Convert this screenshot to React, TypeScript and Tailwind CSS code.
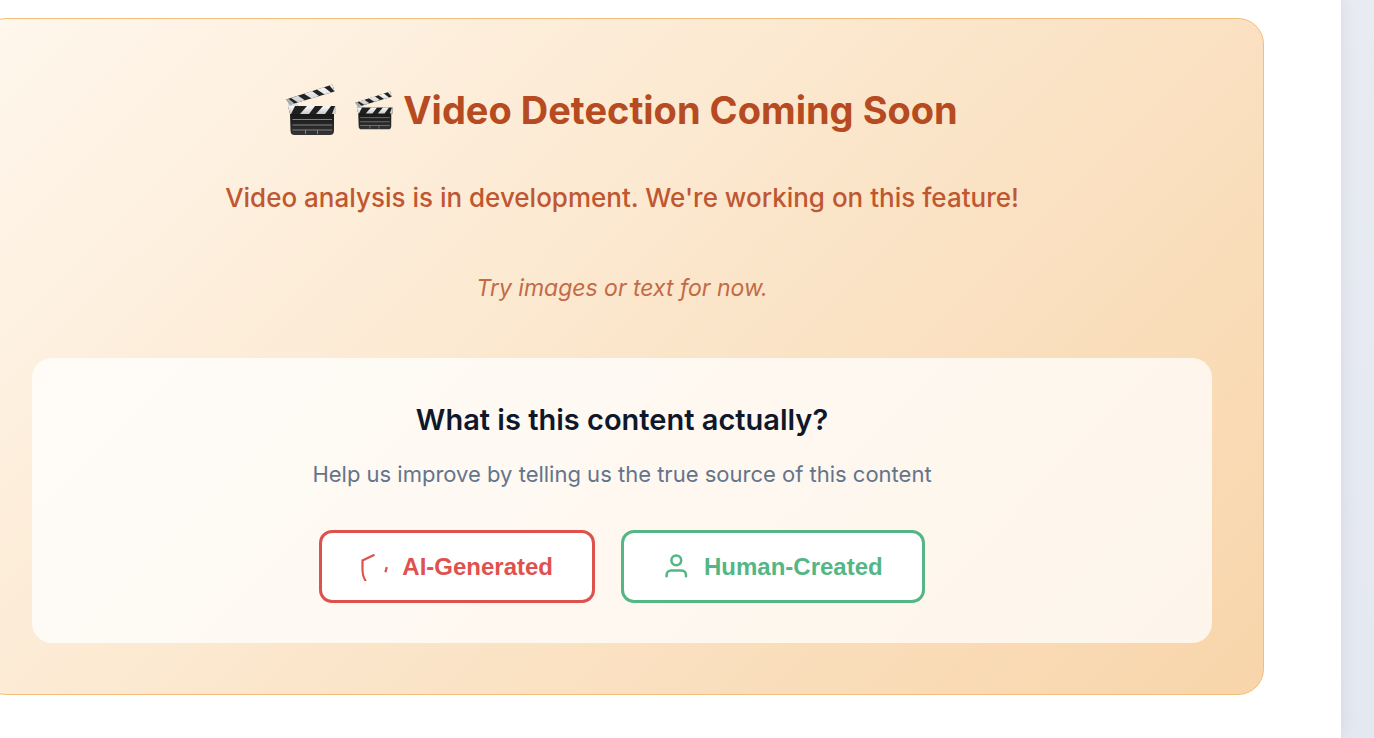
function Clapper({ className }: { className: string }) {
  return (
    <svg viewBox="0 0 50 52" className={className} aria-hidden="true">
      <defs>
        <linearGradient id="slate" x1="0" y1="0" x2="0" y2="1">
          <stop offset="0" stopColor="#161616" />
          <stop offset="1" stopColor="#343434" />
        </linearGradient>
        <linearGradient id="stripe" x1="0" y1="0" x2="0" y2="1">
          <stop offset="0" stopColor="#fafafa" />
          <stop offset="1" stopColor="#c9cbcd" />
        </linearGradient>
      </defs>
      <path d="M1 16L8 15L13 23L14 27L5 28L3 22Z" fill="#bcc3c8" />
      <circle cx="8" cy="22" r="3.500" fill="#dfe3e6" />
      <path d="M0 15.500L46.500 0.500L48.500 7.500L5 20.500Z" fill="#222" />
      <path d="M5 13.900L12 11.700L19 16.300L12 18.400ZM18 9.700L26 7.100L33 12.100L25.500 14.400ZM31 5.500L38 3.200L45 8.500L38.500 10.500Z" fill="url(#stripe)" />
      <path d="M43.500 1.500L46.500 0.500L48.500 7.500Z" fill="url(#stripe)" />
      <path d="M0 15.500L2.500 14.700L8.500 19.500L5 20.500Z" fill="#aeb3b7" />
      <path d="M4 29H48V46.500Q48 51 44 51H8.500Q4.500 51 4.500 46.500Z" fill="url(#slate)" />
      <path d="M2 22H50V30H4Z" fill="#202020" />
      <path d="M2 22H9L5 30H4ZM21 22H29L23 30H14ZM37 22H45L39 30H30Z" fill="url(#stripe)" />
      <path d="M49 22H50V30H46Z" fill="#d0d2d4" />
      <path d="M6.500 35.500H46M6.500 41H46M6.500 46H46M19.500 46V50M31.500 46V50" stroke="#8d8d8d" strokeWidth="0.900" fill="none" />
    </svg>
  );
}

function CircuitIcon() {
  return (
    <svg viewBox="0 0 28 28" className="size-7" fill="none" stroke="currentColor" strokeWidth="2.200" aria-hidden="true">
      <path d="M13.500 1.800L1.500 7.500V17Q1.500 23.500 4.800 28.200M25.800 14L24.400 19.200" />
    </svg>
  );
}

function PersonIcon() {
  return (
    <svg viewBox="0 0 28 28" className="size-7" fill="none" stroke="currentColor" strokeWidth="2.500" strokeLinecap="round" aria-hidden="true">
      <circle cx="13.300" cy="7.300" r="4.900" />
      <path d="M3.600 23.200V22A4.600 4.600 0 0 1 8.200 17.400H18.400A4.600 4.600 0 0 1 23 22V23.200" />
    </svg>
  );
}

const button =
  "flex items-center gap-[13px] rounded-[13px] border-3 bg-white px-[39px] py-[19px] font-['Liberation_Sans',Arial,sans-serif] text-[24px] leading-[29px] font-bold";

export default function App() {
  return (
    <div className="min-h-screen overflow-hidden bg-linear-to-b from-[#e8ebf1] to-[#e4e8f1] pr-[33px] font-['Inter',sans-serif]">
      <main className="min-h-screen bg-white pt-[18px] pr-[77px] pb-[43px] shadow-[0_0_16px_rgba(0,0,0,0.08)]">
        <section className="-ml-5 rounded-[26px] border border-[#f3bd7c] bg-linear-135 from-[#fff7ed] via-[#fbe6cb] to-[#f8d5aa] px-[51px] pt-[63px] pb-[51px] text-center">
          <h1 className="flex items-center justify-center gap-[19px] text-[38px] leading-[56px] font-bold text-[#b64a20]">
            <Clapper className="h-[52px] w-[50px] shrink-0" />
            <span className="flex items-center gap-[10px]">
              <Clapper className="h-[39px] w-[38px] shrink-0" />
              Video Detection Coming Soon
            </span>
          </h1>
          <p className="mt-[40px] text-[26px] leading-[40px] font-medium text-[#bf5731]">
            Video analysis is in development. We're working on this feature!
          </p>
          <p className="mt-[51px] text-[23px] leading-[38px] text-[#c36a47] italic">Try images or text for now.</p>
          <div className="mt-[51px] rounded-[20px] bg-white/75 px-[38px] pt-[42px] pb-[40px]">
            <h2 className="text-[29px] leading-[40px] font-semibold text-[#0f172a]">What is this content actually?</h2>
            <p className="mt-[16px] text-[22px] leading-[36px] text-[#64748b]">
              Help us improve by telling us the true source of this content
            </p>
            <div className="mt-[38px] flex flex-wrap justify-center gap-[26px]">
              <button type="button" className={`${button} border-[#df514d] text-[#df514d]`}>
                <CircuitIcon />
                AI-Generated
              </button>
              <button type="button" className={`${button} border-[#54b685] text-[#54b685]`}>
                <PersonIcon />
                Human-Created
              </button>
            </div>
          </div>
        </section>
      </main>
    </div>
  );
}
